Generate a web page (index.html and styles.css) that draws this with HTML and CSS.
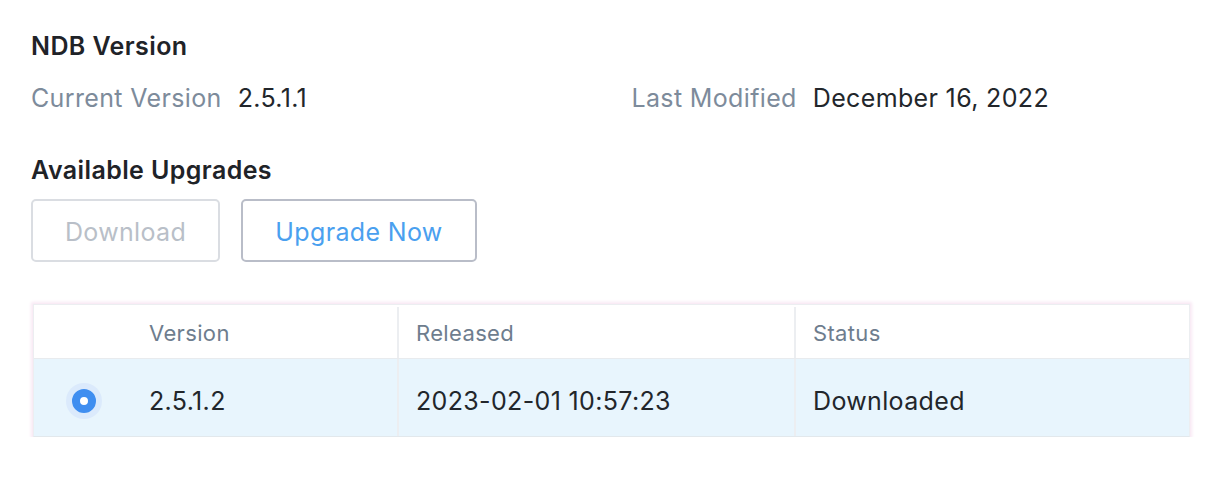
FILE: index.html
```html
<!DOCTYPE html>
<html>
<head>
<meta charset="utf-8">
<link rel="stylesheet" href="styles.css">
</head>
<body>
<div class="page">
  <h2 class="title">NDB Version</h2>
  <div class="info">
    <div class="pair"><span class="label">Current Version</span><span class="value">2.5.1.1</span></div>
    <div class="pair"><span class="label">Last Modified</span><span class="value">December 16, 2022</span></div>
  </div>
  <h2 class="title upgrades">Available Upgrades</h2>
  <div class="buttons">
    <button class="btn disabled">Download</button>
    <button class="btn primary">Upgrade Now</button>
  </div>
  <div class="table">
    <div class="row head">
      <div class="cell sel"></div>
      <div class="cell ver">Version</div>
      <div class="cell rel">Released</div>
      <div class="cell status">Status</div>
    </div>
    <div class="row data selected">
      <div class="cell sel"><span class="radio"><span class="dot"></span></span></div>
      <div class="cell ver">2.5.1.2</div>
      <div class="cell rel">2023-02-01 10:57:23</div>
      <div class="cell status">Downloaded</div>
    </div>
  </div>
</div>
</body>
</html>
```
FILE: styles.css
```css
* { box-sizing: border-box; }
html, body { margin: 0; padding: 0; background: #fff; }
body {
  font-family: "Inter", "Noto Sans", sans-serif;
  color: #22262b;
  letter-spacing: 0.35px;
}
.page {
  padding: 30px 38px 0 31px;
  width: 1228px;
}
.title {
  margin: 0;
  font-size: 25px;
  line-height: 32px;
  font-weight: 600;
  color: #1f2328;
  letter-spacing: 0.4px;
}
.info {
  display: grid;
  grid-template-columns: 1fr 1fr;
  column-gap: 42px;
  margin-top: 20px;
}
.pair {
  display: flex;
  gap: 16px;
  font-size: 25px;
  line-height: 32px;
}
.label { color: #7d8b9b; }
.value { color: #22262b; }
.upgrades { margin-top: 40px; }
.buttons {
  display: flex;
  gap: 21px;
  margin-top: 13px;
}
.btn {
  font-family: inherit;
  letter-spacing: inherit;
  font-size: 25px;
  height: 63px;
  padding: 2px 0 0;
  background: #fff;
  border-radius: 5px;
  border: 2px solid #b9bdc8;
}
.btn.disabled {
  color: #b9bfc8;
  border-color: #dadde2;
  width: 189px;
}
.btn.primary {
  color: #4aa0ef;
  width: 236px;
}
.table {
  margin: 42px 0 0 2px;
  width: 1157px;
  border: 1px solid #eceef1;
  border-bottom-color: #e2e8ec;
  box-shadow: 0 0 3px 2px #f8e8f4;
  background: #fff;
}
.row {
  display: grid;
  grid-template-columns: 97px 266px 397px 1fr;
}
.row.head {
  height: 54px;
  padding-top: 2px;
  border-bottom: 1px solid #e8ebee;
}
.row.head .cell {
  color: #6e7d8e;
  font-size: 22px;
}
.row.data {
  height: 77px;
  background: #e8f5fd;
}
.row.data .cell { padding-top: 6px; }
.cell {
  display: flex;
  align-items: center;
  padding-left: 18px;
  font-size: 25px;
}
.cell.rel, .cell.status { border-left: 2px solid #eceef1; padding-left: 17px; }
.cell.sel { justify-content: center; padding-left: 2px; }
.radio {
  width: 36px;
  height: 36px;
  border-radius: 50%;
  background: #dbeafc;
  display: flex;
  align-items: center;
  justify-content: center;
}
.radio .dot {
  width: 24px;
  height: 24px;
  border-radius: 50%;
  background: #fff;
  border: 8px solid #3f8ef0;
}
```
